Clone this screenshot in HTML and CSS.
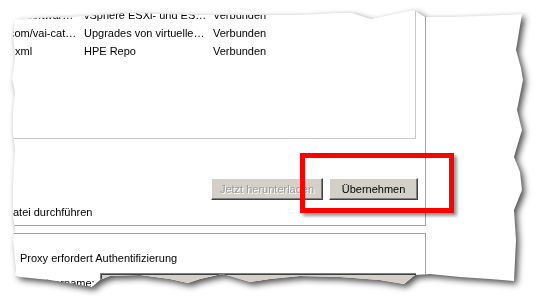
FILE: index.html
```html
<!DOCTYPE html>
<html lang="de">
<head>
  <meta charset="UTF-8" />
  <title>Download-Einstellungen</title>
  <link rel="stylesheet" href="styles.css">
</head>
<body>
  <div class="paper">
    <div class="sheet">
      <div class="window">
        <div class="group group-sources">
          <div class="list">
            <div class="row">
              <span class="cell url">https://hp.vmware.com/software/VUM/PRODUCTION/main/vmw-depot-index.xml</span>
              <span class="cell desc">vSphere ESXi- und ESX-Patches</span>
              <span class="cell state">Verbunden</span>
            </div>
            <div class="row">
              <span class="cell url">https://vrm.vmware.com/vai-catalog/valm/vmw/index.xml</span>
              <span class="cell desc">Upgrades von virtuellen Appliances</span>
              <span class="cell state">Verbunden</span>
            </div>
            <div class="row">
              <span class="cell url">http://hpe.com/index.xml</span>
              <span class="cell desc">HPE Repo</span>
              <span class="cell state">Verbunden</span>
            </div>
          </div>

          <div class="actions">
            <button class="btn btn-wide" disabled>Jetzt herunterladen</button>
            <button class="btn">Übernehmen</button>
          </div>

          <label class="check"><span class="box"></span>Import aus Datei durchführen</label>
        </div>

        <div class="group group-proxy">
          <div class="proxy-title">Proxy erfordert Authentifizierung</div>
          <div class="field">
            <span class="field-label">Benutzername:</span>
            <span class="input"></span>
          </div>
        </div>
      </div>

      <!-- annotation -->
      <div class="callout"></div>
    </div>
  </div>
</body>
</html>
```

FILE: styles.css
```css
:root {
  --face: #d4d0c8;
  --shade: #808080;
  --dark: #404040;
  --group-line: #a0a0a0;
  --list-line: #c8c8c8;
}

body {
  margin: 0;
  background: #fff;
  font-family: "Liberation Sans", Arial, sans-serif;
  font-size: 11px;
  color: #000;
}

.paper {
  width: 542px;
  height: 303px;
  filter: drop-shadow(3px 3px 3px rgba(0, 0, 0, 0.7));
}

.sheet {
  position: relative;
  width: 542px;
  height: 303px;
  background: #fff;
  overflow: hidden;
  clip-path: polygon(
    15px 20px, 40px 18px, 70px 17px, 100px 15px, 130px 13px, 160px 14px,
    200px 15px, 240px 15px, 300px 15px, 340px 13px, 352px 13px, 371px 19px,
    395px 14px, 414px 10px, 425px 17px, 450px 17px, 480px 16px, 505px 15px,
    522px 14px, 519px 32px, 516px 50px, 521px 68px, 523px 80px, 517px 110px,
    522px 130px, 516px 150px, 514px 157px, 520px 172px, 522px 190px,
    514px 210px, 516px 240px, 514px 281px, 490px 279px, 460px 277px,
    430px 274px, 415px 275px, 404px 284px, 380px 280px, 340px 277px,
    300px 276px, 270px 279px, 250px 282px, 230px 276px, 222px 274px,
    200px 279px, 188px 283px, 170px 279px, 140px 275px, 110px 276px,
    100px 280px, 92px 287px, 80px 285px, 50px 280px, 20px 277px,
    15px 275px, 16px 270px, 15px 260px, 13px 240px, 15px 227px,
    13px 218px, 13px 206px, 13px 183px, 15px 150px, 13px 133px, 13px 110px,
    15px 93px, 12px 78px, 14px 68px, 15px 57px, 14px 45px, 13px 37px
  );
}

.window {
  margin-left: -90px;
  width: 516px;
}

.group {
  box-sizing: border-box;
  width: 516px;
  border-right: 1px solid var(--group-line);
  padding-right: 9px;
}

.group-sources {
  border-bottom: 1px solid var(--group-line);
  padding-bottom: 6px;
}

/* list view */
.list {
  box-sizing: border-box;
  height: 139px;
  padding: 6px 0 0 3px;
  border-right: 1px solid var(--list-line);
  border-bottom: 1px solid var(--list-line);
}

.row {
  display: flex;
  height: 18px;
  line-height: 18px;
}

.cell {
  flex: none;
  overflow: hidden;
  white-space: nowrap;
  text-overflow: ellipsis;
  box-sizing: border-box;
}

.url {
  width: 171px;
  padding-right: 5px;
}

.desc {
  width: 129px;
  padding-right: 5px;
}

.state {
  width: 80px;
}

/* buttons */
.actions {
  display: flex;
  justify-content: flex-end;
  gap: 6px;
  margin: 39px -2px 0 0;
}

.btn {
  box-sizing: border-box;
  width: 89px;
  height: 22px;
  padding: 0;
  font-family: inherit;
  font-size: 11px;
  color: #000;
  background: var(--face);
  border: 1px solid;
  border-color: #fff var(--dark) var(--dark) #fff;
  box-shadow: inset -1px -1px 0 var(--shade);
}

.btn-wide {
  width: 112px;
}

.btn:disabled {
  color: #9a9a9a;
  text-shadow: 1px 1px 0 #fff;
}

.check {
  display: flex;
  align-items: center;
  height: 14px;
  margin-top: 5px;
  padding-left: 19px;
}

.box {
  width: 13px;
  height: 13px;
  margin-right: 8px;
  box-sizing: border-box;
  border: 1px solid var(--shade);
  background: #fff;
}

/* proxy group */
.group-proxy {
  margin-top: 7px;
  border-top: 1px solid var(--group-line);
  padding-top: 17px;
  padding-left: 110px;
}

.proxy-title {
  line-height: 14px;
}

.field {
  display: flex;
  align-items: center;
  margin-top: 8px;
}

.field-label {
  width: 80px;
  flex: none;
}

.input {
  flex: 1;
  height: 20px;
  box-sizing: border-box;
  background: var(--face);
  border-top: 1px solid var(--shade);
  border-left: 1px solid var(--shade);
  box-shadow: inset 1px 1px 0 var(--dark);
}

/* red highlight drawn over the screenshot */
.callout {
  position: absolute;
  left: 300px;
  top: 153px;
  width: 154px;
  height: 60px;
  box-sizing: border-box;
  border: 5px solid #ff0000;
  box-shadow: 3px 3px 3px rgba(0, 0, 0, 0.4);
}
```
